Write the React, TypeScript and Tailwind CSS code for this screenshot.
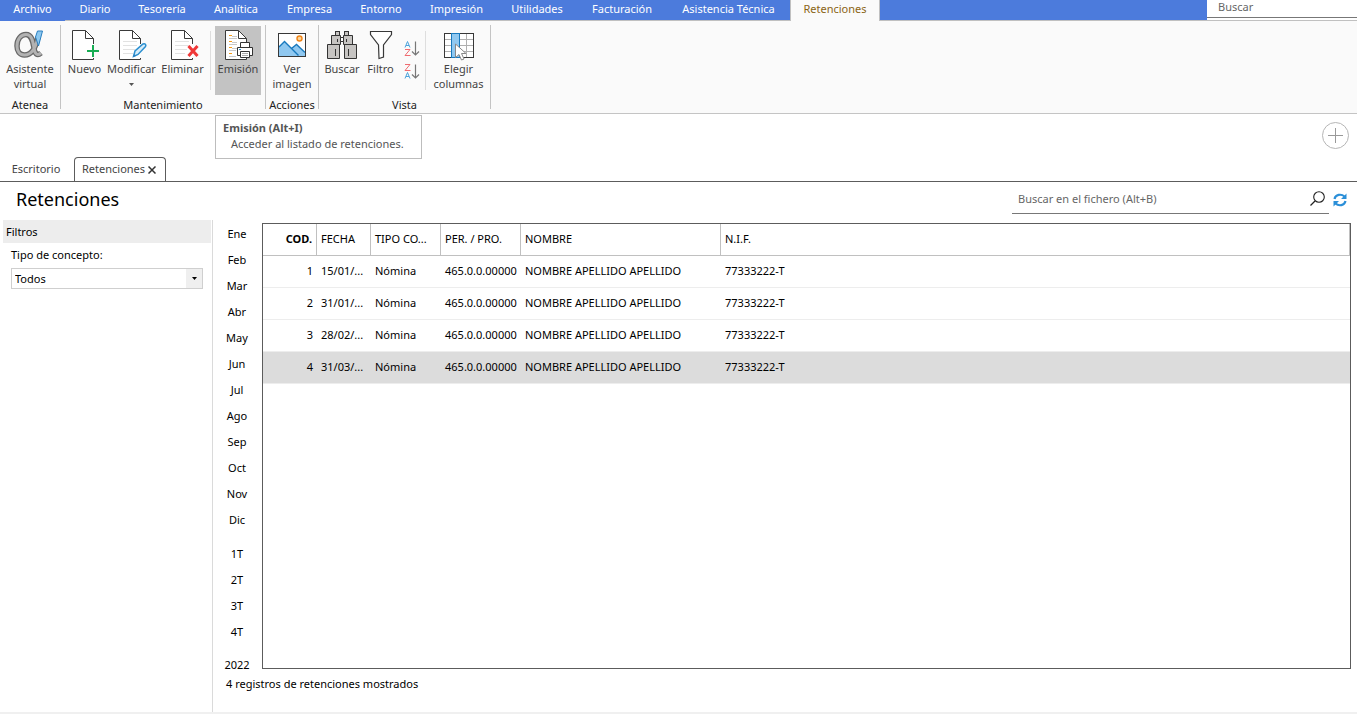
import React from "react";

const menu = [
  { label: "Diario", width: "w-[60px]" },
  { label: "Tesorería", width: "w-[74px]" },
  { label: "Analítica", width: "w-[74px]" },
  { label: "Empresa", width: "w-[73px]" },
  { label: "Entorno", width: "w-[70px]" },
  { label: "Impresión", width: "w-[81px]" },
  { label: "Utilidades", width: "w-[80px]" },
  { label: "Facturación", width: "w-[90px]" },
  { label: "Asistencia Técnica", width: "w-[123px]" },
];

const months = ["Ene", "Feb", "Mar", "Abr", "May", "Jun", "Jul", "Ago", "Sep", "Oct", "Nov", "Dic"];
const quarters = ["1T", "2T", "3T", "4T"];

const rows = [
  { cod: 1, fecha: "15/01/..." },
  { cod: 2, fecha: "31/01/..." },
  { cod: 3, fecha: "28/02/..." },
  { cod: 4, fecha: "31/03/..." },
];

function Page({ lines = false }: { lines?: boolean }) {
  return (
    <>
      <path d="M1.5 1.5H14.5L22.5 9.5V30.5H1.5Z" fill="#fff" stroke="none" />
      <path d="M22.5 15V9.5L14.5 1.5H1.5V30.5H22.5V29" fill="none" stroke="#3a3a3a" />
      <path d="M14.5 1.5V9.5H22.5" fill="none" stroke="#3a3a3a" />
      {lines && <path d="M5 12.5H19M5 16.5H19M5 20.5H17M5 24.5H15" stroke="#e2e2e2" fill="none" />}
    </>
  );
}

function AlphaIcon() {
  const alpha =
    "M25 8C23 18 18.5 26 11.5 26C6.5 26 4 22 4 17C4 10 8 5.500 13 5.500C19 5.500 20 13 21 19C21.700 24.500 24 27.500 28 24";
  return (
    <svg width="34" height="32" viewBox="0 0 34 32" aria-hidden="true">
      <path d={alpha} fill="none" stroke="#686868" strokeWidth="5.500" />
      <path d={alpha} fill="none" stroke="#b2b2b2" strokeWidth="3" />
      <path d="M24.500 2H29.500L25.500 17L22.500 8Z" fill="#8cc8f0" stroke="#2b7fc0" />
    </svg>
  );
}

function NewIcon() {
  return (
    <svg width="32" height="32" viewBox="-2 0 32 32" aria-hidden="true">
      <Page />
      <path d="M22 16V28M16 22H28" stroke="#18ad54" strokeWidth="2" />
    </svg>
  );
}

function EditIcon() {
  return (
    <svg width="32" height="32" viewBox="-2 0 32 32" aria-hidden="true">
      <Page lines />
      <path d="M15.500 27.500L17 22L25 15C27 14 28.500 16 27.500 17.500L20 25.500Z" fill="#d9edf9" stroke="#2b8fd0" strokeWidth="1.500" />
      <path d="M15 28L18 27L16 25Z" fill="#2b7fc0" />
    </svg>
  );
}

function DeleteIcon() {
  return (
    <svg width="32" height="32" viewBox="-3 0 32 32" aria-hidden="true">
      <Page lines />
      <path d="M18.500 17L27.500 27M27.500 17L18.500 27" stroke="#f03838" strokeWidth="3" />
    </svg>
  );
}

function PrintListIcon() {
  return (
    <svg width="32" height="32" viewBox="-2 0 32 32" aria-hidden="true">
      <Page />
      <path d="M5 6.500H8M5 12.500H8M5 18.500H8M5 24.500H8" stroke="#f39a16" />
      <path d="M5 9.500H13M5 15.500H13M5 21.500H12M5 27.500H12M8 7.500H13M8 13.500H13M8 19.500H13" stroke="#c8c8c8" />
      <path d="M16.500 19V13.500H25.500V19" fill="#fff" stroke="#333" />
      <path d="M13.500 18.500H28.500V26.500H25.500V23.500H16.500V26.500H13.500Z" fill="#fff" stroke="#333" />
      <path d="M16.500 22.500H25.500V28.500H16.500Z" fill="#fff" stroke="#333" />
      <path d="M18 24.500H24M18 26.500H24" stroke="#aaa" />
      <path d="M15 20.500H17" stroke="#2b8fd0" />
    </svg>
  );
}

function ImageIcon() {
  return (
    <svg width="32" height="32" viewBox="0 0 32 32" aria-hidden="true">
      <rect x="2.500" y="4.500" width="27" height="23" fill="#fff" />
      <path d="M3 18L8.500 12.500L15 19L20.500 16L29 24V27H3Z" fill="#90c8f0" />
      <path d="M3 18L8.500 12.500L22.500 26.500M15.500 19.500L20.500 15.500L29 23.500" fill="none" stroke="#1879be" strokeWidth="1.400" />
      <circle cx="23.500" cy="9.500" r="2.500" fill="#ffd79a" stroke="#f08519" strokeWidth="1.400" />
      <rect x="2.500" y="4.500" width="27" height="23" fill="none" stroke="#383838" />
    </svg>
  );
}

function BinocularsIcon() {
  return (
    <svg width="32" height="32" viewBox="0 0 32 32" aria-hidden="true">
      <g fill="#c6c4c2" stroke="#333">
        <rect x="9.500" y="2.500" width="4" height="4" />
        <rect x="18.500" y="2.500" width="4" height="4" />
        <path d="M5.500 15.500V6.500H14.500V15.500ZM17.500 15.500V6.500H26.500V15.500Z" />
        <path d="M1.500 29.500V15.500H13.500V29.500ZM18.500 29.500V15.500H30.500V29.500Z" />
        <path d="M14.500 8.500H17.500V12.500H14.500Z" fill="#fff" />
        <path d="M11.500 10V13M20.500 10V13M9.500 20V27M22.500 20V27" />
      </g>
    </svg>
  );
}

function FilterIcon() {
  return (
    <svg width="32" height="32" viewBox="0 0 32 32" aria-hidden="true">
      <path d="M5.500 2.500H26.500V5.500L18.500 16V28L14 29.500L13.500 16L5.500 5.500Z" fill="#fff" stroke="#383838" strokeWidth="1.200" />
    </svg>
  );
}

function SortIcon({ reverse = false }: { reverse?: boolean }) {
  return (
    <svg width="16" height="17" viewBox="0 0 16 17" aria-hidden="true">
      {reverse ? (
        <>
          <path d="M1 1.500H6L1 7.500H6.500" fill="none" stroke="#ef6b70" />
          <path d="M1 15.500L3.500 9.500L6 15.500M2 13.500H5" fill="none" stroke="#4ba3dc" />
        </>
      ) : (
        <>
          <path d="M1 7.500L3.500 1.500L6 7.500M2 5.500H5" fill="none" stroke="#4ba3dc" />
          <path d="M1 9.500H6L1 15.500H6.500" fill="none" stroke="#ef6b70" />
        </>
      )}
      <path d="M11.500 1.500V15M8 11.500L11.500 15L15 11.500" fill="none" stroke="#777" strokeWidth="1.200" />
    </svg>
  );
}

function ColumnsIcon() {
  return (
    <svg width="32" height="32" viewBox="0 0 32 32" aria-hidden="true">
      <rect x="1.500" y="4.500" width="29" height="24" fill="#fff" />
      <path d="M2 10.500H30M2 16.500H30M2 22.500H30M16.500 5V28M23.500 5V28" stroke="#b0b0b0" />
      <rect x="1.500" y="4.500" width="29" height="24" fill="none" stroke="#383838" />
      <rect x="8.500" y="4.500" width="8" height="24" fill="#90c8f0" stroke="#1879be" />
      <path d="M12.500 15V28.500L16 25.500L18.500 31L21 30L18.500 24.500H23Z" fill="#fff" stroke="#888" />
    </svg>
  );
}

function RibbonButton({
  icon,
  children,
  width,
  active = false,
}: {
  icon: React.ReactNode;
  children: React.ReactNode;
  width: string;
  active?: boolean;
}) {
  return (
    <button
      type="button"
      className={`${width} ${active ? "bg-[#c3c3c3]" : ""} flex h-[69px] shrink-0 flex-col items-center whitespace-nowrap pt-[3px] text-[11px] leading-[15px] text-[#444]`}
    >
      {icon}
      {children}
    </button>
  );
}

function Group({ label, className, children }: { label: string; className: string; children: React.ReactNode }) {
  return (
    <section className={`${className} shrink-0 pt-[5px]`} aria-label={label}>
      <div className="flex justify-center">{children}</div>
      <div className="text-center text-[11px] leading-5 text-[#222]">{label}</div>
    </section>
  );
}

const Divider = () => <div className="mt-1 h-[84px] w-px shrink-0 bg-[#c4c4c4]" />;
const InnerDivider = ({ className }: { className: string }) => (
  <div className={`${className} mt-[5px] h-[59px] w-px shrink-0 bg-[#dedede]`} />
);

export default function App() {
  return (
    <div className="flex min-h-screen flex-col bg-white font-['Noto_Sans','Open_Sans',sans-serif] text-[11px] text-black">
      <header className="flex h-[21px] border-b border-[#c0c0c0] bg-[#4c7bdc]">
        <nav className="flex leading-[18px] text-white">
          <button type="button" className="h-[21px] w-[65px] bg-[#4c7bdc] pb-[3px]">Archivo</button>
          {menu.map((item) => (
            <button key={item.label} type="button" className={`${item.width} h-5 whitespace-nowrap pb-0.5`}>
              {item.label}
            </button>
          ))}
          <button type="button" className="h-[21px] w-[90px] border-x border-[#c0c0c0] bg-[#fafafa] pb-[3px] text-[#8a6414]">
            Retenciones
          </button>
        </nav>
        <div className="ml-auto w-[150px] bg-white">
          <input
            aria-label="Buscar"
            placeholder="Buscar"
            className="block h-[18px] w-full border-b border-[#777] px-[11px] pb-[5px] leading-3 outline-none placeholder:text-[#666]"
          />
        </div>
      </header>

      <div className="flex h-[93px] border-b border-[#c4c4c4] bg-[#fafafa]">
        <Group label="Atenea" className="w-[60px]">
          <RibbonButton icon={<AlphaIcon />} width="w-[58px]">
            <span>Asistente</span>
            <span>virtual</span>
          </RibbonButton>
        </Group>
        <Divider />
        <Group label="Mantenimiento" className="w-[204px]">
          <RibbonButton icon={<NewIcon />} width="w-[39px]">Nuevo</RibbonButton>
          <RibbonButton icon={<EditIcon />} width="w-[55px]">
            <span>Modificar</span>
            <svg width="5" height="3" viewBox="0 0 5 3" className="mt-[7px]" aria-hidden="true">
              <path d="M0 0H5L2.500 3Z" fill="#555" />
            </svg>
          </RibbonButton>
          <RibbonButton icon={<DeleteIcon />} width="w-[47px]">Eliminar</RibbonButton>
          <InnerDivider className="mx-1" />
          <RibbonButton icon={<PrintListIcon />} width="w-[46px]" active>Emisión</RibbonButton>
        </Group>
        <Divider />
        <Group label="Acciones" className="w-[52px]">
          <RibbonButton icon={<ImageIcon />} width="w-[52px]">
            <span>Ver</span>
            <span>imagen</span>
          </RibbonButton>
        </Group>
        <Divider />
        <Group label="Vista" className="w-[171px]">
          <RibbonButton icon={<BinocularsIcon />} width="w-[40px]">Buscar</RibbonButton>
          <RibbonButton icon={<FilterIcon />} width="w-[37px]">Filtro</RibbonButton>
          <div className="flex w-[26px] shrink-0 flex-col items-center gap-[6px] pt-[14px]">
            <button type="button" aria-label="Orden ascendente"><SortIcon /></button>
            <button type="button" aria-label="Orden descendente"><SortIcon reverse /></button>
          </div>
          <InnerDivider className="mr-1" />
          <RibbonButton icon={<ColumnsIcon />} width="w-[57px]">
            <span>Elegir</span>
            <span>columnas</span>
          </RibbonButton>
        </Group>
        <Divider />
      </div>

      <div className="relative flex h-[68px] items-end justify-between border-b border-[#5c5c5c]">
        <div role="tooltip" className="absolute left-[215px] top-px h-11 w-[207px] border border-[#bdbdbd] bg-white px-[7px] pt-1 leading-4 text-[#555]">
          <strong className="block">Emisión (Alt+I)</strong>
          <span className="block whitespace-nowrap pl-2">Acceder al listado de retenciones.</span>
        </div>
        <div className="flex text-[#444]">
          <button type="button" className="h-6 w-[74px] pr-[2px]">Escritorio</button>
          <div className="-mb-px flex h-6 w-[92px] items-center gap-[3px] rounded-t-[4px] border border-b-0 border-[#5c5c5c] bg-white pl-[7px]">
            <button type="button">Retenciones</button>
            <button type="button" aria-label="Cerrar">
              <svg width="8" height="8" viewBox="0 0 8 8" aria-hidden="true">
                <path d="M.5.5L7.500 7.500M7.500.5L.5 7.500" stroke="#333" strokeWidth="1.500" />
              </svg>
            </button>
          </div>
        </div>
        <button type="button" aria-label="Añadir" className="mb-8 mr-2">
          <svg width="27" height="27" viewBox="0 0 27 27" aria-hidden="true">
            <circle cx="13.500" cy="13.500" r="13" fill="none" stroke="#b5b5b5" />
            <path d="M13.500 6V21M6 13.500H21" stroke="#999" />
          </svg>
        </button>
      </div>

      <div className="flex h-[38px] justify-between">
        <h1 className="pl-4 text-[18px] leading-[35px]">Retenciones</h1>
        <div className="flex pr-[10px]">
          <div className="flex h-8 w-[317px] items-center border-b border-[#777] pl-1.5 pr-1 pt-0.5">
            <input
              aria-label="Buscar en el fichero"
              placeholder="Buscar en el fichero (Alt+B)"
              className="h-7 flex-1 outline-none placeholder:text-[#666]"
            />
            <button type="button" aria-label="Buscar">
              <svg width="15" height="15" viewBox="0 0 15 15" aria-hidden="true">
                <circle cx="9" cy="6" r="5.300" fill="none" stroke="#222" strokeWidth="1.100" />
                <path d="M5 10L.5 14.500" stroke="#222" strokeWidth="1.300" />
              </svg>
            </button>
          </div>
          <button type="button" aria-label="Actualizar" className="ml-1 flex h-9 items-center">
            <svg width="14" height="14" viewBox="0 0 14 14" aria-hidden="true">
              <path d="M1.500 6C2.500 1.500 8 .5 11.500 3.500M12.500 8C11.500 12.500 6 13.500 2.500 10.500" fill="none" stroke="#2b8fd8" strokeWidth="2.200" />
              <path d="M13.500 .5V6H8ZM.5 13.500V8H6Z" fill="#2b8fd8" />
            </svg>
          </button>
        </div>
      </div>

      <main className="flex flex-1">
        <aside className="w-[213px] shrink-0 border-r border-[#dadada] pl-[3px] pr-px">
          <h2 className="h-[23px] bg-[#ededed] pl-[3px] leading-[23px]">Filtros</h2>
          <div className="px-2">
            <label htmlFor="concept" className="block h-[25px] leading-6">Tipo de concepto:</label>
            <div className="relative flex h-[21px] border border-[#cfcfcf]">
              <select id="concept" className="w-full appearance-none bg-white pl-[3px] pt-px outline-none">
                <option>Todos</option>
              </select>
              <span className="pointer-events-none absolute inset-y-0 right-0 flex w-4 items-center justify-center bg-[#efefef]">
                <svg width="5" height="3" viewBox="0 0 5 3" aria-hidden="true">
                  <path d="M0 0H5L2.500 3Z" fill="#000" />
                </svg>
              </span>
            </div>
          </div>
        </aside>

        <div className="flex min-w-0 flex-1 flex-col">
          <div className="flex flex-1">
            <nav aria-label="Periodo" className="flex w-[49px] shrink-0 flex-col pr-px pt-px">
              {months.map((m) => <button key={m} type="button" className="h-[26px]">{m}</button>)}
              <div className="flex flex-col py-2">
                {quarters.map((q) => <button key={q} type="button" className="h-[26px]">{q}</button>)}
              </div>
              <button type="button" className="h-[25px]">2022</button>
            </nav>
            <div className="mb-[9px] mr-1.5 mt-[3px] flex-1 border border-[#5c5c5c]">
              <table className="w-full table-fixed border-separate border-spacing-0 text-left">
                <colgroup>
                  <col className="w-[54px]" />
                  <col className="w-[54px]" />
                  <col className="w-[70px]" />
                  <col className="w-[80px]" />
                  <col className="w-[200px]" />
                  <col />
                </colgroup>
                <thead>
                  <tr className="h-8 *:border-b *:border-r *:border-[#c0c0c0] *:p-0 *:pl-1 *:font-normal">
                    <th><span className="block pr-1 text-right font-bold">COD.</span></th>
                    <th>FECHA</th>
                    <th>TIPO CO...</th>
                    <th>PER. / PRO.</th>
                    <th>NOMBRE</th>
                    <th>N.I.F.</th>
                  </tr>
                </thead>
                <tbody>
                  {rows.map((r) => (
                    <tr
                      key={r.cod}
                      className={`${r.cod === 4 ? "bg-[#dcdcdc]" : ""} h-8 whitespace-nowrap *:border-b *:border-[#ededed] *:p-0 *:pl-1`}
                    >
                      <td><span className="block pr-1 text-right">{r.cod}</span></td>
                      <td>{r.fecha}</td>
                      <td>Nómina</td>
                      <td>465.0.0.00000</td>
                      <td>NOMBRE APELLIDO APELLIDO</td>
                      <td>77333222-T</td>
                    </tr>
                  ))}
                </tbody>
              </table>
            </div>
          </div>
          <p className="h-[34px] pl-[13px] leading-[11px]">4 registros de retenciones mostrados</p>
        </div>
      </main>
      <footer className="h-0.5 bg-[#f0f0f0]" />
    </div>
  );
}
